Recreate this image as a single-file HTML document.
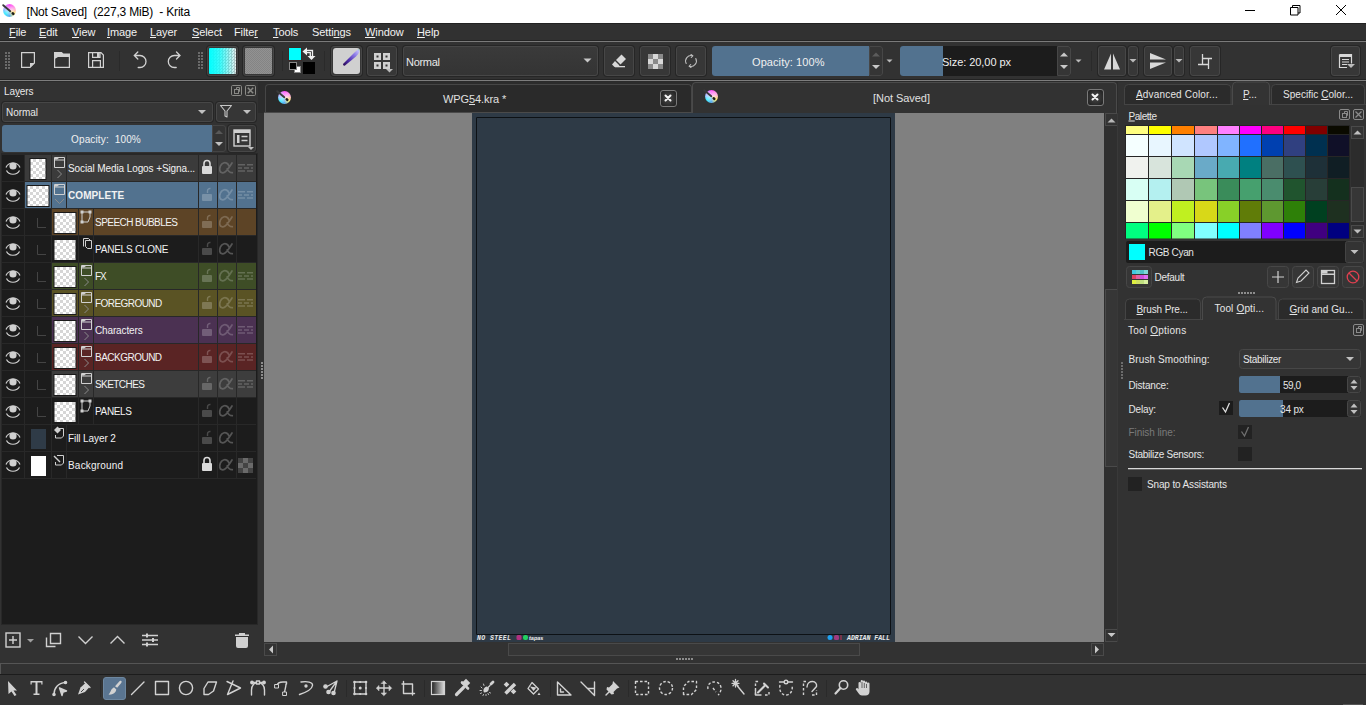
<!DOCTYPE html>
<html><head><meta charset="utf-8">
<style>
*{margin:0;padding:0;box-sizing:border-box}
html,body{width:1366px;height:705px;overflow:hidden;background:#323232;font-family:"Liberation Sans",sans-serif;font-size:12px;color:#e6e6e6}
.a{position:absolute}
.t{position:absolute;white-space:pre;line-height:1}
.btn{position:absolute;background:#373737;border:1px solid #474747;border-radius:3px;box-shadow:0 0 0 1px #262626}
u{text-decoration:underline;text-underline-offset:1px;text-decoration-thickness:1px}
</style></head><body>
<!-- title bar -->
<div class="a" style="left:0;top:0;width:1366px;height:23px;background:#fff"></div>
<div class="t" style="left:26.5px;top:6px;color:#000;font-size:12px;letter-spacing:-0.2px">[Not Saved]  (227,3 MiB)  - Krita</div>
<!-- menu bar -->
<div class="a" style="left:0;top:23px;width:1366px;height:18px;background:#313131"></div>
<div class="a" style="left:0;top:23px;width:1366px;height:1px;background:#222"></div>
<div class="a" style="left:0;top:40px;width:1366px;height:1px;background:#242424"></div>
<div class="a" style="left:0;top:41px;width:1366px;height:1px;background:#7a7a7a"></div>
<!-- toolbar -->
<div class="a" style="left:0;top:42px;width:1366px;height:37px;background:#323232"></div>
<div class="a" style="left:0;top:79px;width:1366px;height:1px;background:#232323"></div>
<div class="a" style="left:0;top:80px;width:1366px;height:1px;background:#7d7d7d"></div>
<div class="a" style="left:0;top:81px;width:1366px;height:1px;background:#2b2b2b"></div>
<!-- status bar -->
<div class="a" style="left:0;top:663px;width:1366px;height:1px;background:#555"></div>
<div class="a" style="left:0;top:674px;width:1366px;height:1px;background:#1c1c1c"></div>
<div class="a" style="left:0;top:663px;width:1px;height:11px;background:#555"></div>
<!-- menu text -->
<div class="t" style="left:9px;top:27px;font-size:11px;color:#f2f2f2;letter-spacing:-0.1px"><u>F</u>ile</div>
<div class="t" style="left:39px;top:27px;font-size:11px;color:#f2f2f2;letter-spacing:-0.1px"><u>E</u>dit</div>
<div class="t" style="left:72px;top:27px;font-size:11px;color:#f2f2f2;letter-spacing:-0.1px"><u>V</u>iew</div>
<div class="t" style="left:107px;top:27px;font-size:11px;color:#f2f2f2;letter-spacing:-0.1px"><u>I</u>mage</div>
<div class="t" style="left:150px;top:27px;font-size:11px;color:#f2f2f2;letter-spacing:-0.1px"><u>L</u>ayer</div>
<div class="t" style="left:192px;top:27px;font-size:11px;color:#f2f2f2;letter-spacing:-0.1px"><u>S</u>elect</div>
<div class="t" style="left:234px;top:27px;font-size:11px;color:#f2f2f2;letter-spacing:-0.1px">Filte<u>r</u></div>
<div class="t" style="left:273px;top:27px;font-size:11px;color:#f2f2f2;letter-spacing:-0.1px"><u>T</u>ools</div>
<div class="t" style="left:312px;top:27px;font-size:11px;color:#f2f2f2;letter-spacing:-0.1px">Setti<u>n</u>gs</div>
<div class="t" style="left:365px;top:27px;font-size:11px;color:#f2f2f2;letter-spacing:-0.1px"><u>W</u>indow</div>
<div class="t" style="left:417px;top:27px;font-size:11px;color:#f2f2f2;letter-spacing:-0.1px"><u>H</u>elp</div>

<svg class="a" style="left:0;top:0" width="1366" height="81" viewBox="0 0 1366 81">
 <!-- window controls -->
 <g stroke="#000" stroke-width="1" fill="none">
  <path d="M1245 10.5H1255"/>
  <path d="M1290.5 7.5h7.5v7.5h-7.5z M1292.5 7.5v-2h7.5v7.5h-2"/>
  <path d="M1336 5L1346 15M1346 5L1336 15"/>
 </g>
 <!-- grip 1 -->
 <g fill="#6a6a6a">
  <rect x="5" y="52" width="2" height="2"/><rect x="8" y="52" width="2" height="2"/>
  <rect x="5" y="55" width="2" height="2"/><rect x="8" y="55" width="2" height="2"/>
  <rect x="5" y="58" width="2" height="2"/><rect x="8" y="58" width="2" height="2"/>
  <rect x="5" y="61" width="2" height="2"/><rect x="8" y="61" width="2" height="2"/>
  <rect x="5" y="64" width="2" height="2"/><rect x="8" y="64" width="2" height="2"/>
  <rect x="5" y="67" width="2" height="2"/><rect x="8" y="67" width="2" height="2"/>
 </g>
 <g fill="#6a6a6a">
  <rect x="198" y="52" width="2" height="2"/><rect x="201" y="52" width="2" height="2"/>
  <rect x="198" y="55" width="2" height="2"/><rect x="201" y="55" width="2" height="2"/>
  <rect x="198" y="58" width="2" height="2"/><rect x="201" y="58" width="2" height="2"/>
  <rect x="198" y="61" width="2" height="2"/><rect x="201" y="61" width="2" height="2"/>
  <rect x="198" y="64" width="2" height="2"/><rect x="201" y="64" width="2" height="2"/>
  <rect x="198" y="67" width="2" height="2"/><rect x="201" y="67" width="2" height="2"/>
 </g>
 <!-- new / open / save -->
 <g stroke="#d2d2d2" stroke-width="1.2" fill="none">
  <path d="M21.6 52.6H34.4V63L30 67.4H21.6Z"/>
  <path d="M54.6 52.6H61.5L63 54H69.4V67.4H54.6Z"/>
  <path d="M88.6 52.6H101L103.4 55V67.4H88.6Z M92.6 52.6V57.4H100V52.6 M92.6 67.4V60.6H100.4V67.4"/>
 </g>
 <path d="M30 63H34.6L30 67.6Z" fill="#d2d2d2"/>
 <path d="M54.6 52.6H61.5L63 54H69.4V57H58L54.6 59Z" fill="#d2d2d2"/>
 <rect x="97" y="53" width="2.5" height="4" fill="#d2d2d2"/>
 <rect x="119" y="51" width="1" height="20" fill="#2a2a2a"/>
 <!-- undo redo -->
 <g stroke="#d2d2d2" stroke-width="1.3" fill="none" stroke-linecap="round">
  <path d="M138.2 67.5H140A6 6 0 0 0 140 55.5H134.5 M137.8 52L134.3 55.5L137.8 59"/>
  <path d="M176.2 67.5H174.3A6 6 0 0 1 174.3 55.5H179.8 M176.5 52L180 55.5L176.5 59"/>
 </g>
 <rect x="282" y="51" width="1" height="20" fill="#2a2a2a"/>
 <rect x="324" y="51" width="1" height="20" fill="#2a2a2a"/>
 <rect x="1091" y="51" width="1" height="20" fill="#2a2a2a"/>
</svg>

<!-- gradient / pattern buttons -->
<div class="btn" style="left:207px;top:46px;width:31px;height:30px"></div>
<div class="a" style="left:209px;top:48px;width:27px;height:26px;border-radius:1px;background:linear-gradient(90deg,#00ffff 0%,rgba(0,255,255,0.75) 40%,rgba(0,255,255,0) 100%),repeating-conic-gradient(#b8c4c4 0 25%,#e8f0f0 0 50%) 0 0/3px 3px"></div>
<div class="btn" style="left:243px;top:46px;width:31px;height:30px"></div>
<div class="a" style="left:245px;top:48px;width:27px;height:26px;border-radius:1px;background:repeating-conic-gradient(#848484 0 25%,#929292 0 50%) 0 0/2px 2px"></div>
<!-- fg/bg -->
<div class="a" style="left:289px;top:48px;width:12px;height:12px;background:#00ffff;box-shadow:0 0 0 1px #3a2a2a"></div>
<div class="a" style="left:303px;top:62px;width:12px;height:12px;background:#000"></div>
<div class="a" style="left:294px;top:66px;width:7px;height:7px;background:#fff;border:1px solid #888"></div>
<div class="a" style="left:289px;top:62px;width:8px;height:8px;background:#000;border:1px solid #888"></div>
<svg class="a" style="left:300px;top:45px" width="18" height="18" viewBox="300 45 18 18">
 <path d="M302.5 51.5L307 47.5V55.5Z" fill="#f0f0f0"/>
 <path d="M307.5 56H315.5L311.5 60Z" fill="#f0f0f0"/>
 <path d="M306.5 50.5H312.5V56.5 M306.5 52.7H310.3V56.5" fill="none" stroke="#f0f0f0" stroke-width="1.3"/>
</svg>
<!-- brush preset btn -->
<div class="btn" style="left:331px;top:46px;width:31px;height:30px"></div>
<div class="a" style="left:333px;top:48px;width:27px;height:26px;border-radius:3px;background:#d0d0d0"></div>
<svg class="a" style="left:333px;top:47px" width="27" height="20" viewBox="0 0 27 20">
 <defs><linearGradient id="bp" x1="0" y1="1" x2="1" y2="0"><stop offset="0" stop-color="#2a0a50"/><stop offset="0.35" stop-color="#5030b0"/><stop offset="0.7" stop-color="#9080e8"/><stop offset="0.9" stop-color="#c0b8f8"/><stop offset="1" stop-color="#80d8c0"/></linearGradient></defs>
 <path d="M10 17L21.5 5.5C23 4 24.5 2.5 26 2L26.5 4.5C25.5 6.5 24.5 8 23 9.5L12 18.5C11 19 10 18.5 10 17Z" fill="url(#bp)"/>
</svg>
<!-- workspace btn -->
<div class="btn" style="left:367px;top:46px;width:30px;height:30px"></div>
<svg class="a" style="left:367px;top:46px" width="30" height="30" viewBox="0 0 30 30">
 <g fill="#d0d0d0"><rect x="7" y="7" width="7" height="7"/><rect x="16" y="7" width="7" height="7"/><rect x="7" y="16" width="7" height="7"/><rect x="16" y="16" width="7" height="7"/></g>
 <g fill="#333"><rect x="9.5" y="9.5" width="2" height="2"/><rect x="18.5" y="9.5" width="2" height="2"/><rect x="9.5" y="18.5" width="2" height="2"/><rect x="18.5" y="18.5" width="2" height="2"/></g>
 <path d="M19 23L26 23L22.5 26.5Z" fill="#bbb"/>
</svg>
<!-- blend combo -->
<div class="btn" style="left:403px;top:46px;width:195px;height:30px;background:linear-gradient(#3a3a3a,#343434)"></div>
<div class="t" style="left:406px;top:57px;font-size:11px;color:#e8e8e8;letter-spacing:-0.3px">Normal</div>
<svg class="a" style="left:583px;top:58px" width="10" height="6"><path d="M0.5 0.5H8.5L4.5 4.5Z" fill="#c8c8c8"/></svg>
<!-- eraser / checker / reload -->
<div class="btn" style="left:604px;top:46px;width:30px;height:30px"></div>
<svg class="a" style="left:604px;top:46px" width="30" height="30" viewBox="0 0 30 30">
 <path d="M17.5 8.5L22 13L16.5 18.5L12 14Z" fill="#d8d8d8"/>
 <path d="M11 15L15.5 19.5L14 21H10.5L8 18.5Z" fill="#d8d8d8"/>
 <rect x="11" y="20" width="10" height="1.3" fill="#d8d8d8"/>
</svg>
<div class="btn" style="left:640px;top:46px;width:30px;height:30px"></div>
<svg class="a" style="left:648px;top:54px" width="15" height="15" viewBox="0 0 15 15">
 <rect width="15" height="15" fill="#d8d8d8"/>
 <g fill="#8a8a8a"><rect x="0" y="0" width="5" height="5"/><rect x="10" y="0" width="5" height="5"/><rect x="5" y="5" width="5" height="5"/><rect x="0" y="10" width="5" height="5"/><rect x="10" y="10" width="5" height="5"/></g>
</svg>
<div class="btn" style="left:676px;top:46px;width:30px;height:30px"></div>
<svg class="a" style="left:676px;top:46px" width="30" height="30" viewBox="0 0 30 30">
 <g stroke="#bdbdbd" stroke-width="1.1" fill="none" stroke-linecap="round">
  <path d="M16.5 9.7A5.5 5.5 0 0 0 10.2 17.5"/>
  <path d="M13.5 20.3A5.5 5.5 0 0 0 19.8 12.5"/>
  <path d="M15 8.5L16.8 9.8L15.3 11.5"/>
  <path d="M15 21.5L13.2 20.2L14.7 18.5"/>
 </g>
</svg>
<!-- opacity slider -->
<div class="a" style="left:712px;top:46px;width:171px;height:30px;border-radius:3px;background:#1e1e1e;border:1px solid #262626"></div>
<div class="a" style="left:712px;top:46px;width:157px;height:30px;border-radius:3px 0 0 3px;background:#52728f"></div>
<div class="a" style="left:869px;top:46px;width:14px;height:30px;border-radius:0 3px 3px 0;background:#353535;border:1px solid #474747"></div>
<svg class="a" style="left:870px;top:50px" width="12" height="22"><path d="M2 6.5H10L6 2.5Z" fill="#5c5c5c"/><path d="M2 15H10L6 19Z" fill="#c8c8c8"/></svg>
<div class="t" style="left:752px;top:57px;font-size:11px;color:#f0f0f0;letter-spacing:0.08px">Opacity: 100%</div>
<svg class="a" style="left:886px;top:59px" width="8" height="5"><path d="M0.5 0.5H6.5L3.5 3.5Z" fill="#bbb"/></svg>
<!-- size slider -->
<div class="a" style="left:900px;top:46px;width:171px;height:30px;border-radius:3px;background:#1c1c1c"></div>
<div class="a" style="left:900px;top:46px;width:43px;height:30px;border-radius:3px 0 0 3px;background:#52728f"></div>
<div class="a" style="left:1057px;top:46px;width:14px;height:30px;border-radius:0 3px 3px 0;background:#353535;border:1px solid #474747"></div>
<svg class="a" style="left:1058px;top:50px" width="12" height="22"><path d="M2 6.5H10L6 2.5Z" fill="#c8c8c8"/><path d="M2 15H10L6 19Z" fill="#c8c8c8"/></svg>
<div class="t" style="left:942px;top:57px;font-size:11px;color:#f0f0f0;letter-spacing:-0.05px">Size: 20,00 px</div>
<svg class="a" style="left:1075px;top:59px" width="8" height="5"><path d="M0.5 0.5H6.5L3.5 3.5Z" fill="#bbb"/></svg>
<!-- mirror etc -->
<div class="btn" style="left:1098px;top:46px;width:28px;height:30px"></div>
<div class="btn" style="left:1128px;top:46px;width:10px;height:30px"></div>
<div class="btn" style="left:1144px;top:46px;width:28px;height:30px"></div>
<div class="btn" style="left:1174px;top:46px;width:10px;height:30px"></div>
<div class="btn" style="left:1190px;top:46px;width:30px;height:30px"></div>
<div class="btn" style="left:1331px;top:46px;width:29px;height:30px"></div>
<svg class="a" style="left:0;top:0" width="1366" height="81" viewBox="0 0 1366 81">
 <g fill="#d8d8d8">
  <path d="M1104 69.5H1111V53.5Z"/><path d="M1113 53.5V69.5H1120Z"/>
  <path d="M1129.5 59H1136.5L1133 62.5Z" fill="#bbb"/>
  <path d="M1150 53L1166 59.5H1150Z"/><path d="M1150 62.5H1166L1150 69Z"/>
  <path d="M1175.5 59H1182.5L1179 62.5Z" fill="#bbb"/>
 </g>
 <g stroke="#d8d8d8" stroke-width="1.3" fill="none">
  <path d="M1202.5 54V65M1202.5 58.5H1212M1198 64.5H1208.5M1208.5 58.5V69"/>
 </g>
 <g fill="none" stroke="#d8d8d8" stroke-width="1.2">
  <path d="M1339.5 54.5H1351.5V63.5M1339.5 54.5V67.5H1347"/>
  <path d="M1342 59.5H1349M1342 62H1349M1342 64.5H1347"/>
 </g>
 <rect x="1340" y="55" width="11.5" height="2" fill="#d8d8d8"/>
 <path d="M1347 64H1355L1351 68Z" fill="#bbb"/>
</svg>


<div class="a" style="left:3.200000000000001px;top:4.200000000000001px;width:13.2px;height:13.2px;border-radius:50%;background:conic-gradient(from 0deg,#ff50f8 0deg,#ffb0e0 70deg,#fff070 125deg,#60b0f0 180deg,#40f0ff 235deg,#c0a8ff 300deg,#ff50f8 360deg)"></div>
<div class="a" style="left:5.1800000000000015px;top:6.1800000000000015px;width:9.239999999999998px;height:9.239999999999998px;border-radius:50%;background:radial-gradient(rgba(255,255,255,0.6),rgba(255,255,255,0))"></div>
<svg class="a" style="left:0.8000000000000007px;top:1.8000000000000007px" width="18" height="18" viewBox="0 0 18 18"><path d="M2.2 3.2L9.3 9.2" stroke="#3a3a3a" stroke-width="1.9" stroke-linecap="round"/><ellipse cx="12" cy="11.6" rx="1.7" ry="1.3" transform="rotate(40 12 11.6)" fill="#1e1e1e"/></svg><div class="t" style="left:4px;top:86.5px;font-size:10px;color:#e8e8e8;letter-spacing:-0.1px">La<u>y</u>ers</div>
<svg class="a" style="left:230px;top:84px" width="28" height="14" viewBox="0 0 28 14">
 <g fill="none" stroke="#8a8a86" stroke-width="1">
  <rect x="1.5" y="1.5" width="10" height="10" rx="1.2"/>
  <rect x="4.5" y="5.5" width="4" height="4"/><path d="M6.5 5.5V3.5H9.5V7.5H8.5"/>
  <rect x="15.5" y="1.5" width="10" height="10" rx="1.2"/>
  <path d="M17.8 3.8L23.2 9.2M23.2 3.8L17.8 9.2" stroke-width="1.5"/>
 </g></svg>
<div class="btn" style="left:2px;top:102px;width:211px;height:20px;background:#363636"></div>
<div class="t" style="left:6px;top:108.2px;font-size:10px;color:#e8e8e8;letter-spacing:-0.05px">Normal</div>
<svg class="a" style="left:198px;top:110px" width="9" height="5"><path d="M0 0H8L4 4Z" fill="#c0c0c0"/></svg>
<div class="btn" style="left:216px;top:102px;width:40px;height:20px;background:#363636"></div>
<svg class="a" style="left:216px;top:102px" width="40" height="20" viewBox="0 0 40 20">
 <path d="M4.5 3.5H15.5L11 9V15L9 14V9Z" fill="none" stroke="#c8c8c8" stroke-width="1.1" stroke-linejoin="round"/>
 <path d="M27 8H35L31 12Z" fill="#c0c0c0"/></svg>
<div class="a" style="left:2px;top:125px;width:210px;height:27px;border-radius:3px 0 0 3px;background:#52728f"></div>
<div class="t" style="left:71px;top:135px;font-size:10px;color:#f0f0f0;letter-spacing:0.15px">Opacity:  100%</div>
<div class="a" style="left:212px;top:125px;width:14px;height:27px;border-radius:0 3px 3px 0;background:#333;border:1px solid #444"></div>
<svg class="a" style="left:213px;top:128px" width="12" height="22"><path d="M2 6H10L6 2Z" fill="#585858"/><path d="M2 14H10L6 18Z" fill="#c0c0c0"/></svg>
<div class="btn" style="left:228px;top:125px;width:28px;height:27px;background:#363636"></div>
<svg class="a" style="left:228px;top:125px" width="28" height="27" viewBox="0 0 28 27">
 <rect x="6" y="5" width="16" height="16" fill="none" stroke="#d0d0d0" stroke-width="1.4"/>
 <rect x="6" y="5" width="16" height="3" fill="#d0d0d0"/>
 <rect x="9" y="10" width="2.5" height="8" fill="#d0d0d0"/>
 <path d="M13.5 11.5H19.5M13.5 15.5H19.5" stroke="#d0d0d0" stroke-width="1.3"/>
 <path d="M20 22H26L23 25Z" fill="#c0c0c0"/></svg>
<div class="a" style="left:1px;top:153px;width:257px;height:472px;background:#1c1c1c;border:1px solid #282828"></div>
<svg class="a" style="left:0;top:150px" width="260" height="340" viewBox="0 150 260 340">
<rect x="2" y="154" width="254" height="1" fill="#282828"/>
<rect x="25" y="155" width="231" height="26" fill="#3b3b3b"/>
<rect x="24" y="155" width="1" height="26" fill="#282828"/>
<rect x="51" y="155" width="1" height="26" fill="#282828"/>
<rect x="66" y="155" width="1" height="26" fill="#282828"/>
<rect x="198" y="155" width="1" height="26" fill="#282828"/>
<rect x="217" y="155" width="1" height="26" fill="#282828"/>
<rect x="236" y="155" width="1" height="26" fill="#282828"/>
<path d="M6 167.5A7.5 7 0 0 1 20 167.5" fill="none" stroke="#d0d0d0" stroke-width="1.2"/>
<circle cx="13" cy="166" r="3.6" fill="#d0d0d0"/>
<path d="M6.5 170.5A7 6 0 0 0 19.5 170.5" fill="none" stroke="#d0d0d0" stroke-width="1.2"/>
<rect x="29.5" y="158" width="17" height="22" fill="#1a1a1a"/>
<rect x="30.5" y="159" width="15" height="20" fill="url(#chk)"/>
<path d="M54.5 157.5H64.5V167.5H54.5Z M54.5 160H64.5" fill="none" stroke="#d0d0d0" stroke-width="1"/>
<path d="M55 158H59L57 159.5H55Z" fill="#d0d0d0"/>
<path d="M57.5 170L61.5 174L57.5 178" fill="none" stroke="#8a8a8a" stroke-width="1"/>
<path d="M204 166V163.5A3 3 0 0 1 210 163.5V166" fill="none" stroke="#dadada" stroke-width="1.6"/>
<rect x="202" y="166" width="10" height="8" rx="1" fill="#dadada"/>
<path transform="translate(0 -297.5)" d="M229 463.5C228 460.5 225.5 459.8 223.5 460.5C220.5 461.5 219.3 465.5 219.8 468C220.3 470.5 223 470.8 225 469.5C227 468.2 229.5 464.5 232 460.5 M227.2 466.3C228.2 468.8 229.5 470.3 232.3 470.2" fill="none" stroke="rgba(255,255,255,0.2)" stroke-width="1.75" stroke-linecap="round"/>
<path d="M238 164.7H245M247 164.7H253" stroke="rgba(255,255,255,0.2)" stroke-width="1.6"/>
<path d="M238 168H242M244 168H249M251 168H253" stroke="rgba(255,255,255,0.2)" stroke-width="1.6"/>
<path d="M238 171H245M247 171H253" stroke="rgba(255,255,255,0.2)" stroke-width="1.6"/>
<text x="68" y="172" font-family="Liberation Sans" font-size="10" letter-spacing="-0.1" font-weight="normal" fill="#f2f2f2">Social Media Logos +Signa...</text>
<rect x="2" y="181" width="254" height="1" fill="#282828"/>
<rect x="25" y="182" width="231" height="26" fill="#52728f"/>
<rect x="24" y="182" width="1" height="26" fill="#282828"/>
<rect x="51" y="182" width="1" height="26" fill="#282828"/>
<rect x="66" y="182" width="1" height="26" fill="#282828"/>
<rect x="198" y="182" width="1" height="26" fill="#282828"/>
<rect x="217" y="182" width="1" height="26" fill="#282828"/>
<rect x="236" y="182" width="1" height="26" fill="#282828"/>
<path d="M6 194.5A7.5 7 0 0 1 20 194.5" fill="none" stroke="#d0d0d0" stroke-width="1.2"/>
<circle cx="13" cy="193" r="3.6" fill="#d0d0d0"/>
<path d="M6.5 197.5A7 6 0 0 0 19.5 197.5" fill="none" stroke="#d0d0d0" stroke-width="1.2"/>
<rect x="26.5" y="185" width="23" height="22" fill="#1a1a1a"/>
<rect x="27.5" y="186" width="21" height="20" fill="url(#chk)"/>
<path d="M54.5 184.5H64.5V194.5H54.5Z M54.5 187H64.5" fill="none" stroke="#d0d0d0" stroke-width="1"/>
<path d="M55 185H59L57 186.5H55Z" fill="#d0d0d0"/>
<path d="M55 199L59.5 203.5L64 199" fill="none" stroke="#8a8a8a" stroke-width="1"/>
<path d="M207.5 193V191A2.5 2.5 0 0 1 210.5 188.5" fill="none" stroke="rgba(255,255,255,0.22)" stroke-width="1.4"/>
<rect x="202" y="194" width="10" height="7" rx="1" fill="rgba(255,255,255,0.22)"/>
<path transform="translate(0 -270.5)" d="M229 463.5C228 460.5 225.5 459.8 223.5 460.5C220.5 461.5 219.3 465.5 219.8 468C220.3 470.5 223 470.8 225 469.5C227 468.2 229.5 464.5 232 460.5 M227.2 466.3C228.2 468.8 229.5 470.3 232.3 470.2" fill="none" stroke="rgba(255,255,255,0.2)" stroke-width="1.75" stroke-linecap="round"/>
<path d="M238 191.7H245M247 191.7H253" stroke="rgba(255,255,255,0.2)" stroke-width="1.6"/>
<path d="M238 195H242M244 195H249M251 195H253" stroke="rgba(255,255,255,0.2)" stroke-width="1.6"/>
<path d="M238 198H245M247 198H253" stroke="rgba(255,255,255,0.2)" stroke-width="1.6"/>
<text x="68" y="199" font-family="Liberation Sans" font-size="10" letter-spacing="0.07" font-weight="bold" fill="#f2f2f2">COMPLETE</text>
<rect x="2" y="208" width="254" height="1" fill="#282828"/>
<rect x="52" y="209" width="204" height="26" fill="#5d4426"/>
<rect x="24" y="209" width="1" height="26" fill="#282828"/>
<rect x="78" y="209" width="1" height="26" fill="#282828"/>
<rect x="93" y="209" width="1" height="26" fill="#282828"/>
<rect x="198" y="209" width="1" height="26" fill="#282828"/>
<rect x="217" y="209" width="1" height="26" fill="#282828"/>
<rect x="236" y="209" width="1" height="26" fill="#282828"/>
<rect x="51" y="209" width="1" height="26" fill="#282828"/>
<path d="M37.5 218V227.5H46" stroke="#444" stroke-width="1" fill="none"/>
<path d="M6 221.5A7.5 7 0 0 1 20 221.5" fill="none" stroke="#d0d0d0" stroke-width="1.2"/>
<circle cx="13" cy="220" r="3.6" fill="#d0d0d0"/>
<path d="M6.5 224.5A7 6 0 0 0 19.5 224.5" fill="none" stroke="#d0d0d0" stroke-width="1.2"/>
<rect x="53.5" y="212" width="23" height="22" fill="#1a1a1a"/>
<rect x="54.5" y="213" width="21" height="20" fill="url(#chk)"/>
<path d="M82 212H90V217L88 222H82Z" fill="none" stroke="#d0d0d0" stroke-width="1"/>
<rect x="80.5" y="210.5" width="3" height="3" fill="#d0d0d0"/>
<rect x="88.5" y="210.5" width="3" height="3" fill="#d0d0d0"/>
<rect x="80.5" y="220.5" width="3" height="3" fill="#d0d0d0"/>
<path d="M207.5 220V218A2.5 2.5 0 0 1 210.5 215.5" fill="none" stroke="rgba(255,255,255,0.22)" stroke-width="1.4"/>
<rect x="202" y="221" width="10" height="7" rx="1" fill="rgba(255,255,255,0.22)"/>
<path transform="translate(0 -243.5)" d="M229 463.5C228 460.5 225.5 459.8 223.5 460.5C220.5 461.5 219.3 465.5 219.8 468C220.3 470.5 223 470.8 225 469.5C227 468.2 229.5 464.5 232 460.5 M227.2 466.3C228.2 468.8 229.5 470.3 232.3 470.2" fill="none" stroke="rgba(255,255,255,0.2)" stroke-width="1.75" stroke-linecap="round"/>
<text x="95" y="226" font-family="Liberation Sans" font-size="10" letter-spacing="-0.54" font-weight="normal" fill="#f2f2f2">SPEECH BUBBLES</text>
<rect x="2" y="235" width="254" height="1" fill="#282828"/>
<rect x="24" y="236" width="1" height="26" fill="#282828"/>
<rect x="78" y="236" width="1" height="26" fill="#282828"/>
<rect x="93" y="236" width="1" height="26" fill="#282828"/>
<rect x="198" y="236" width="1" height="26" fill="#282828"/>
<rect x="217" y="236" width="1" height="26" fill="#282828"/>
<rect x="236" y="236" width="1" height="26" fill="#282828"/>
<rect x="51" y="236" width="1" height="26" fill="#282828"/>
<path d="M37.5 245V254.5H46" stroke="#444" stroke-width="1" fill="none"/>
<path d="M6 248.5A7.5 7 0 0 1 20 248.5" fill="none" stroke="#d0d0d0" stroke-width="1.2"/>
<circle cx="13" cy="247" r="3.6" fill="#d0d0d0"/>
<path d="M6.5 251.5A7 6 0 0 0 19.5 251.5" fill="none" stroke="#d0d0d0" stroke-width="1.2"/>
<rect x="53.5" y="239" width="23" height="22" fill="#1a1a1a"/>
<rect x="54.5" y="240" width="21" height="20" fill="url(#chk)"/>
<path d="M83.5 246.5V238.5H88.5L90.5 240.5" fill="none" stroke="#d0d0d0" stroke-width="1"/>
<path d="M85.5 240.5H91.5V248.5H87.5L85.5 246.5Z" fill="#1c1c1c" stroke="#d0d0d0" stroke-width="1"/>
<path d="M207.5 247V245A2.5 2.5 0 0 1 210.5 242.5" fill="none" stroke="#4a4a4a" stroke-width="1.4"/>
<rect x="202" y="248" width="10" height="7" rx="1" fill="#4a4a4a"/>
<path transform="translate(0 -216.5)" d="M229 463.5C228 460.5 225.5 459.8 223.5 460.5C220.5 461.5 219.3 465.5 219.8 468C220.3 470.5 223 470.8 225 469.5C227 468.2 229.5 464.5 232 460.5 M227.2 466.3C228.2 468.8 229.5 470.3 232.3 470.2" fill="none" stroke="#555" stroke-width="1.75" stroke-linecap="round"/>
<text x="95" y="253" font-family="Liberation Sans" font-size="10" letter-spacing="-0.23" font-weight="normal" fill="#f2f2f2">PANELS CLONE</text>
<rect x="2" y="262" width="254" height="1" fill="#282828"/>
<rect x="52" y="263" width="204" height="26" fill="#3e4d26"/>
<rect x="24" y="263" width="1" height="26" fill="#282828"/>
<rect x="78" y="263" width="1" height="26" fill="#282828"/>
<rect x="93" y="263" width="1" height="26" fill="#282828"/>
<rect x="198" y="263" width="1" height="26" fill="#282828"/>
<rect x="217" y="263" width="1" height="26" fill="#282828"/>
<rect x="236" y="263" width="1" height="26" fill="#282828"/>
<rect x="51" y="263" width="1" height="26" fill="#282828"/>
<path d="M37.5 272V281.5H46" stroke="#444" stroke-width="1" fill="none"/>
<path d="M6 275.5A7.5 7 0 0 1 20 275.5" fill="none" stroke="#d0d0d0" stroke-width="1.2"/>
<circle cx="13" cy="274" r="3.6" fill="#d0d0d0"/>
<path d="M6.5 278.5A7 6 0 0 0 19.5 278.5" fill="none" stroke="#d0d0d0" stroke-width="1.2"/>
<rect x="53.5" y="266" width="23" height="22" fill="#1a1a1a"/>
<rect x="54.5" y="267" width="21" height="20" fill="url(#chk)"/>
<path d="M81.5 265.5H91.5V275.5H81.5Z M81.5 268H91.5" fill="none" stroke="#d0d0d0" stroke-width="1"/>
<path d="M82 266H86L84 267.5H82Z" fill="#d0d0d0"/>
<path d="M84.5 278L88.5 282L84.5 286" fill="none" stroke="#8a8a8a" stroke-width="1"/>
<path d="M207.5 274V272A2.5 2.5 0 0 1 210.5 269.5" fill="none" stroke="rgba(255,255,255,0.22)" stroke-width="1.4"/>
<rect x="202" y="275" width="10" height="7" rx="1" fill="rgba(255,255,255,0.22)"/>
<path transform="translate(0 -189.5)" d="M229 463.5C228 460.5 225.5 459.8 223.5 460.5C220.5 461.5 219.3 465.5 219.8 468C220.3 470.5 223 470.8 225 469.5C227 468.2 229.5 464.5 232 460.5 M227.2 466.3C228.2 468.8 229.5 470.3 232.3 470.2" fill="none" stroke="rgba(255,255,255,0.2)" stroke-width="1.75" stroke-linecap="round"/>
<path d="M238 272.7H245M247 272.7H253" stroke="rgba(255,255,255,0.2)" stroke-width="1.6"/>
<path d="M238 276H242M244 276H249M251 276H253" stroke="rgba(255,255,255,0.2)" stroke-width="1.6"/>
<path d="M238 279H245M247 279H253" stroke="rgba(255,255,255,0.2)" stroke-width="1.6"/>
<text x="95" y="280" font-family="Liberation Sans" font-size="10" letter-spacing="-1.0" font-weight="normal" fill="#f2f2f2">FX</text>
<rect x="2" y="289" width="254" height="1" fill="#282828"/>
<rect x="52" y="290" width="204" height="26" fill="#5a5324"/>
<rect x="24" y="290" width="1" height="26" fill="#282828"/>
<rect x="78" y="290" width="1" height="26" fill="#282828"/>
<rect x="93" y="290" width="1" height="26" fill="#282828"/>
<rect x="198" y="290" width="1" height="26" fill="#282828"/>
<rect x="217" y="290" width="1" height="26" fill="#282828"/>
<rect x="236" y="290" width="1" height="26" fill="#282828"/>
<rect x="51" y="290" width="1" height="26" fill="#282828"/>
<path d="M37.5 299V308.5H46" stroke="#444" stroke-width="1" fill="none"/>
<path d="M6 302.5A7.5 7 0 0 1 20 302.5" fill="none" stroke="#d0d0d0" stroke-width="1.2"/>
<circle cx="13" cy="301" r="3.6" fill="#d0d0d0"/>
<path d="M6.5 305.5A7 6 0 0 0 19.5 305.5" fill="none" stroke="#d0d0d0" stroke-width="1.2"/>
<rect x="53.5" y="293" width="23" height="22" fill="#1a1a1a"/>
<rect x="54.5" y="294" width="21" height="20" fill="url(#chk)"/>
<path d="M81.5 292.5H91.5V302.5H81.5Z M81.5 295H91.5" fill="none" stroke="#d0d0d0" stroke-width="1"/>
<path d="M82 293H86L84 294.5H82Z" fill="#d0d0d0"/>
<path d="M84.5 305L88.5 309L84.5 313" fill="none" stroke="#8a8a8a" stroke-width="1"/>
<path d="M207.5 301V299A2.5 2.5 0 0 1 210.5 296.5" fill="none" stroke="rgba(255,255,255,0.22)" stroke-width="1.4"/>
<rect x="202" y="302" width="10" height="7" rx="1" fill="rgba(255,255,255,0.22)"/>
<path transform="translate(0 -162.5)" d="M229 463.5C228 460.5 225.5 459.8 223.5 460.5C220.5 461.5 219.3 465.5 219.8 468C220.3 470.5 223 470.8 225 469.5C227 468.2 229.5 464.5 232 460.5 M227.2 466.3C228.2 468.8 229.5 470.3 232.3 470.2" fill="none" stroke="rgba(255,255,255,0.2)" stroke-width="1.75" stroke-linecap="round"/>
<path d="M238 299.7H245M247 299.7H253" stroke="rgba(255,255,255,0.2)" stroke-width="1.6"/>
<path d="M238 303H242M244 303H249M251 303H253" stroke="rgba(255,255,255,0.2)" stroke-width="1.6"/>
<path d="M238 306H245M247 306H253" stroke="rgba(255,255,255,0.2)" stroke-width="1.6"/>
<text x="95" y="307" font-family="Liberation Sans" font-size="10" letter-spacing="-0.56" font-weight="normal" fill="#f2f2f2">FOREGROUND</text>
<rect x="2" y="316" width="254" height="1" fill="#282828"/>
<rect x="52" y="317" width="204" height="26" fill="#4b3152"/>
<rect x="24" y="317" width="1" height="26" fill="#282828"/>
<rect x="78" y="317" width="1" height="26" fill="#282828"/>
<rect x="93" y="317" width="1" height="26" fill="#282828"/>
<rect x="198" y="317" width="1" height="26" fill="#282828"/>
<rect x="217" y="317" width="1" height="26" fill="#282828"/>
<rect x="236" y="317" width="1" height="26" fill="#282828"/>
<rect x="51" y="317" width="1" height="26" fill="#282828"/>
<path d="M37.5 326V335.5H46" stroke="#444" stroke-width="1" fill="none"/>
<path d="M6 329.5A7.5 7 0 0 1 20 329.5" fill="none" stroke="#d0d0d0" stroke-width="1.2"/>
<circle cx="13" cy="328" r="3.6" fill="#d0d0d0"/>
<path d="M6.5 332.5A7 6 0 0 0 19.5 332.5" fill="none" stroke="#d0d0d0" stroke-width="1.2"/>
<rect x="53.5" y="320" width="23" height="22" fill="#1a1a1a"/>
<rect x="54.5" y="321" width="21" height="20" fill="url(#chk)"/>
<path d="M81.5 319.5H91.5V329.5H81.5Z M81.5 322H91.5" fill="none" stroke="#d0d0d0" stroke-width="1"/>
<path d="M82 320H86L84 321.5H82Z" fill="#d0d0d0"/>
<path d="M84.5 332L88.5 336L84.5 340" fill="none" stroke="#8a8a8a" stroke-width="1"/>
<path d="M207.5 328V326A2.5 2.5 0 0 1 210.5 323.5" fill="none" stroke="rgba(255,255,255,0.22)" stroke-width="1.4"/>
<rect x="202" y="329" width="10" height="7" rx="1" fill="rgba(255,255,255,0.22)"/>
<path transform="translate(0 -135.5)" d="M229 463.5C228 460.5 225.5 459.8 223.5 460.5C220.5 461.5 219.3 465.5 219.8 468C220.3 470.5 223 470.8 225 469.5C227 468.2 229.5 464.5 232 460.5 M227.2 466.3C228.2 468.8 229.5 470.3 232.3 470.2" fill="none" stroke="rgba(255,255,255,0.2)" stroke-width="1.75" stroke-linecap="round"/>
<path d="M238 326.7H245M247 326.7H253" stroke="rgba(255,255,255,0.2)" stroke-width="1.6"/>
<path d="M238 330H242M244 330H249M251 330H253" stroke="rgba(255,255,255,0.2)" stroke-width="1.6"/>
<path d="M238 333H245M247 333H253" stroke="rgba(255,255,255,0.2)" stroke-width="1.6"/>
<text x="95" y="334" font-family="Liberation Sans" font-size="10" letter-spacing="-0.14" font-weight="normal" fill="#f2f2f2">Characters</text>
<rect x="2" y="343" width="254" height="1" fill="#282828"/>
<rect x="52" y="344" width="204" height="26" fill="#5a2424"/>
<rect x="24" y="344" width="1" height="26" fill="#282828"/>
<rect x="78" y="344" width="1" height="26" fill="#282828"/>
<rect x="93" y="344" width="1" height="26" fill="#282828"/>
<rect x="198" y="344" width="1" height="26" fill="#282828"/>
<rect x="217" y="344" width="1" height="26" fill="#282828"/>
<rect x="236" y="344" width="1" height="26" fill="#282828"/>
<rect x="51" y="344" width="1" height="26" fill="#282828"/>
<path d="M37.5 353V362.5H46" stroke="#444" stroke-width="1" fill="none"/>
<path d="M6 356.5A7.5 7 0 0 1 20 356.5" fill="none" stroke="#d0d0d0" stroke-width="1.2"/>
<circle cx="13" cy="355" r="3.6" fill="#d0d0d0"/>
<path d="M6.5 359.5A7 6 0 0 0 19.5 359.5" fill="none" stroke="#d0d0d0" stroke-width="1.2"/>
<rect x="53.5" y="347" width="23" height="22" fill="#1a1a1a"/>
<rect x="54.5" y="348" width="21" height="20" fill="url(#chk)"/>
<path d="M81.5 346.5H91.5V356.5H81.5Z M81.5 349H91.5" fill="none" stroke="#d0d0d0" stroke-width="1"/>
<path d="M82 347H86L84 348.5H82Z" fill="#d0d0d0"/>
<path d="M84.5 359L88.5 363L84.5 367" fill="none" stroke="#8a8a8a" stroke-width="1"/>
<path d="M207.5 355V353A2.5 2.5 0 0 1 210.5 350.5" fill="none" stroke="rgba(255,255,255,0.22)" stroke-width="1.4"/>
<rect x="202" y="356" width="10" height="7" rx="1" fill="rgba(255,255,255,0.22)"/>
<path transform="translate(0 -108.5)" d="M229 463.5C228 460.5 225.5 459.8 223.5 460.5C220.5 461.5 219.3 465.5 219.8 468C220.3 470.5 223 470.8 225 469.5C227 468.2 229.5 464.5 232 460.5 M227.2 466.3C228.2 468.8 229.5 470.3 232.3 470.2" fill="none" stroke="rgba(255,255,255,0.2)" stroke-width="1.75" stroke-linecap="round"/>
<path d="M238 353.7H245M247 353.7H253" stroke="rgba(255,255,255,0.2)" stroke-width="1.6"/>
<path d="M238 357H242M244 357H249M251 357H253" stroke="rgba(255,255,255,0.2)" stroke-width="1.6"/>
<path d="M238 360H245M247 360H253" stroke="rgba(255,255,255,0.2)" stroke-width="1.6"/>
<text x="95" y="361" font-family="Liberation Sans" font-size="10" letter-spacing="-0.51" font-weight="normal" fill="#f2f2f2">BACKGROUND</text>
<rect x="2" y="370" width="254" height="1" fill="#282828"/>
<rect x="52" y="371" width="204" height="26" fill="#3d3d3d"/>
<rect x="24" y="371" width="1" height="26" fill="#282828"/>
<rect x="78" y="371" width="1" height="26" fill="#282828"/>
<rect x="93" y="371" width="1" height="26" fill="#282828"/>
<rect x="198" y="371" width="1" height="26" fill="#282828"/>
<rect x="217" y="371" width="1" height="26" fill="#282828"/>
<rect x="236" y="371" width="1" height="26" fill="#282828"/>
<rect x="51" y="371" width="1" height="26" fill="#282828"/>
<path d="M37.5 380V389.5H46" stroke="#444" stroke-width="1" fill="none"/>
<path d="M6 383.5A7.5 7 0 0 1 20 383.5" fill="none" stroke="#d0d0d0" stroke-width="1.2"/>
<circle cx="13" cy="382" r="3.6" fill="#d0d0d0"/>
<path d="M6.5 386.5A7 6 0 0 0 19.5 386.5" fill="none" stroke="#d0d0d0" stroke-width="1.2"/>
<rect x="53.5" y="374" width="23" height="22" fill="#1a1a1a"/>
<rect x="54.5" y="375" width="21" height="20" fill="url(#chk)"/>
<path d="M81.5 373.5H91.5V383.5H81.5Z M81.5 376H91.5" fill="none" stroke="#d0d0d0" stroke-width="1"/>
<path d="M82 374H86L84 375.5H82Z" fill="#d0d0d0"/>
<path d="M84.5 386L88.5 390L84.5 394" fill="none" stroke="#8a8a8a" stroke-width="1"/>
<path d="M207.5 382V380A2.5 2.5 0 0 1 210.5 377.5" fill="none" stroke="rgba(255,255,255,0.22)" stroke-width="1.4"/>
<rect x="202" y="383" width="10" height="7" rx="1" fill="rgba(255,255,255,0.22)"/>
<path transform="translate(0 -81.5)" d="M229 463.5C228 460.5 225.5 459.8 223.5 460.5C220.5 461.5 219.3 465.5 219.8 468C220.3 470.5 223 470.8 225 469.5C227 468.2 229.5 464.5 232 460.5 M227.2 466.3C228.2 468.8 229.5 470.3 232.3 470.2" fill="none" stroke="rgba(255,255,255,0.2)" stroke-width="1.75" stroke-linecap="round"/>
<path d="M238 380.7H245M247 380.7H253" stroke="rgba(255,255,255,0.2)" stroke-width="1.6"/>
<path d="M238 384H242M244 384H249M251 384H253" stroke="rgba(255,255,255,0.2)" stroke-width="1.6"/>
<path d="M238 387H245M247 387H253" stroke="rgba(255,255,255,0.2)" stroke-width="1.6"/>
<text x="95" y="388" font-family="Liberation Sans" font-size="10" letter-spacing="-0.57" font-weight="normal" fill="#f2f2f2">SKETCHES</text>
<rect x="2" y="397" width="254" height="1" fill="#282828"/>
<rect x="24" y="398" width="1" height="26" fill="#282828"/>
<rect x="78" y="398" width="1" height="26" fill="#282828"/>
<rect x="93" y="398" width="1" height="26" fill="#282828"/>
<rect x="198" y="398" width="1" height="26" fill="#282828"/>
<rect x="217" y="398" width="1" height="26" fill="#282828"/>
<rect x="236" y="398" width="1" height="26" fill="#282828"/>
<rect x="51" y="398" width="1" height="26" fill="#282828"/>
<path d="M37.5 407V416.5H46" stroke="#444" stroke-width="1" fill="none"/>
<path d="M6 410.5A7.5 7 0 0 1 20 410.5" fill="none" stroke="#d0d0d0" stroke-width="1.2"/>
<circle cx="13" cy="409" r="3.6" fill="#d0d0d0"/>
<path d="M6.5 413.5A7 6 0 0 0 19.5 413.5" fill="none" stroke="#d0d0d0" stroke-width="1.2"/>
<rect x="53.5" y="401" width="23" height="22" fill="#1a1a1a"/>
<rect x="54.5" y="402" width="21" height="20" fill="url(#chk)"/>
<path d="M82 401H90V406L88 411H82Z" fill="none" stroke="#d0d0d0" stroke-width="1"/>
<rect x="80.5" y="399.5" width="3" height="3" fill="#d0d0d0"/>
<rect x="88.5" y="399.5" width="3" height="3" fill="#d0d0d0"/>
<rect x="80.5" y="409.5" width="3" height="3" fill="#d0d0d0"/>
<path d="M207.5 409V407A2.5 2.5 0 0 1 210.5 404.5" fill="none" stroke="#4a4a4a" stroke-width="1.4"/>
<rect x="202" y="410" width="10" height="7" rx="1" fill="#4a4a4a"/>
<path transform="translate(0 -54.5)" d="M229 463.5C228 460.5 225.5 459.8 223.5 460.5C220.5 461.5 219.3 465.5 219.8 468C220.3 470.5 223 470.8 225 469.5C227 468.2 229.5 464.5 232 460.5 M227.2 466.3C228.2 468.8 229.5 470.3 232.3 470.2" fill="none" stroke="#555" stroke-width="1.75" stroke-linecap="round"/>
<text x="95" y="415" font-family="Liberation Sans" font-size="10" letter-spacing="-0.35" font-weight="normal" fill="#f2f2f2">PANELS</text>
<rect x="2" y="424" width="254" height="1" fill="#282828"/>
<rect x="24" y="425" width="1" height="26" fill="#282828"/>
<rect x="51" y="425" width="1" height="26" fill="#282828"/>
<rect x="66" y="425" width="1" height="26" fill="#282828"/>
<rect x="198" y="425" width="1" height="26" fill="#282828"/>
<rect x="217" y="425" width="1" height="26" fill="#282828"/>
<rect x="236" y="425" width="1" height="26" fill="#282828"/>
<path d="M6 437.5A7.5 7 0 0 1 20 437.5" fill="none" stroke="#d0d0d0" stroke-width="1.2"/>
<circle cx="13" cy="436" r="3.6" fill="#d0d0d0"/>
<path d="M6.5 440.5A7 6 0 0 0 19.5 440.5" fill="none" stroke="#d0d0d0" stroke-width="1.2"/>
<rect x="31" y="429" width="15" height="20" fill="#2f3b47"/>
<path d="M58 428.5H63.5V436L61.5 438H55.5V435" fill="none" stroke="#d0d0d0" stroke-width="1"/>
<path d="M57.5 426.5L61 430L57.5 433.5L54 430Z" fill="#d0d0d0"/>
<path d="M207.5 436V434A2.5 2.5 0 0 1 210.5 431.5" fill="none" stroke="#4a4a4a" stroke-width="1.4"/>
<rect x="202" y="437" width="10" height="7" rx="1" fill="#4a4a4a"/>
<path transform="translate(0 -27.5)" d="M229 463.5C228 460.5 225.5 459.8 223.5 460.5C220.5 461.5 219.3 465.5 219.8 468C220.3 470.5 223 470.8 225 469.5C227 468.2 229.5 464.5 232 460.5 M227.2 466.3C228.2 468.8 229.5 470.3 232.3 470.2" fill="none" stroke="#555" stroke-width="1.75" stroke-linecap="round"/>
<text x="68" y="442" font-family="Liberation Sans" font-size="10" letter-spacing="-0.09" font-weight="normal" fill="#f2f2f2">Fill Layer 2</text>
<rect x="2" y="451" width="254" height="1" fill="#282828"/>
<rect x="24" y="452" width="1" height="26" fill="#282828"/>
<rect x="51" y="452" width="1" height="26" fill="#282828"/>
<rect x="66" y="452" width="1" height="26" fill="#282828"/>
<rect x="198" y="452" width="1" height="26" fill="#282828"/>
<rect x="217" y="452" width="1" height="26" fill="#282828"/>
<rect x="236" y="452" width="1" height="26" fill="#282828"/>
<path d="M6 464.5A7.5 7 0 0 1 20 464.5" fill="none" stroke="#d0d0d0" stroke-width="1.2"/>
<circle cx="13" cy="463" r="3.6" fill="#d0d0d0"/>
<path d="M6.5 467.5A7 6 0 0 0 19.5 467.5" fill="none" stroke="#d0d0d0" stroke-width="1.2"/>
<rect x="31" y="456" width="15" height="20" fill="#ffffff"/>
<path d="M57 455.5H63.5V463L61.5 465H55.5V462" fill="none" stroke="#d0d0d0" stroke-width="1"/>
<path d="M54 456L60 462" stroke="#d0d0d0" stroke-width="1.4"/>
<path d="M204 463V460.5A3 3 0 0 1 210 460.5V463" fill="none" stroke="#dadada" stroke-width="1.6"/>
<rect x="202" y="463" width="10" height="8" rx="1" fill="#dadada"/>
<path transform="translate(0 -0.5)" d="M229 463.5C228 460.5 225.5 459.8 223.5 460.5C220.5 461.5 219.3 465.5 219.8 468C220.3 470.5 223 470.8 225 469.5C227 468.2 229.5 464.5 232 460.5 M227.2 466.3C228.2 468.8 229.5 470.3 232.3 470.2" fill="none" stroke="#555" stroke-width="1.75" stroke-linecap="round"/>
<rect x="238" y="458" width="15" height="15" fill="#444"/>
<rect x="238" y="463" width="5" height="5" fill="#6a6a6a"/>
<rect x="243" y="458" width="5" height="5" fill="#6a6a6a"/>
<rect x="243" y="468" width="5" height="5" fill="#6a6a6a"/>
<rect x="248" y="463" width="5" height="5" fill="#6a6a6a"/>
<text x="68" y="469" font-family="Liberation Sans" font-size="10" letter-spacing="0.2" font-weight="normal" fill="#f2f2f2">Background</text>
<rect x="2" y="478" width="254" height="1" fill="#282828"/>
<defs><pattern id="chk" width="6" height="6" patternUnits="userSpaceOnUse" x="0" y="0"><rect width="6" height="6" fill="#fff"/><rect width="3" height="3" fill="#d6d6d6"/><rect x="3" y="3" width="3" height="3" fill="#d6d6d6"/></pattern></defs>
</svg>
<svg class="a" style="left:0;top:626px" width="258" height="30" viewBox="0 626 258 30">
 <g fill="none" stroke="#d0d0d0" stroke-width="1.4">
  <rect x="6" y="633" width="14" height="14"/>
  <path d="M13 636V644M9 640H17"/>
  <path d="M46.5 637.5V646.5H55.5 M50.5 633.5H60.5V643.5H50.5Z"/>
  <path d="M78.5 636.5L85.5 643.5L92.5 636.5"/>
  <path d="M110.5 643.5L117.5 636.5L124.5 643.5"/>
  <path d="M142 635.5H158M142 640H158M142 644.5H158" stroke-width="1.3"/>
 </g>
 <path d="M27 639H34L30.5 642.5Z" fill="#a0a0a0"/>
 <g fill="#d0d0d0"><rect x="146" y="633.5" width="2" height="4"/><rect x="152" y="638" width="2" height="4"/><rect x="146" y="642.5" width="2" height="4"/></g>
 <path d="M239 633H245V634.5H249V636H235V634.5H239Z M236 637H248V646A2 2 0 0 1 246 648H238A2 2 0 0 1 236 646Z" fill="#d0d0d0"/>
</svg><!-- canvas tab bar -->
<div class="a" style="left:258px;top:82px;width:860px;height:31px;background:#2c2c2c"></div>
<div class="a" style="left:265px;top:84px;width:427px;height:29px;background:#2a2a2a;border:1px solid #464646;border-bottom:none;border-radius:4px 4px 0 0"></div>
<div class="a" style="left:692px;top:82px;width:425px;height:31px;background:#323232;border:1px solid #4a4a4a;border-bottom:none;border-radius:4px 4px 0 0"></div>
<div class="a" style="left:264px;top:112px;width:428px;height:1px;background:#4a4a4a"></div>
<div class="t" style="left:443px;top:94px;font-size:11px;color:#e0e0e0;letter-spacing:-0.1px">WPG<u>5</u>4.kra *</div>
<div class="t" style="left:873px;top:93px;font-size:11px;color:#e0e0e0;letter-spacing:-0.05px">[Not Saved]</div>
<div class="a" style="left:660px;top:90px;width:17px;height:17px;border-radius:3px;background:radial-gradient(#484848,#1e1e1e);border:1px solid #7a7a7a"></div>
<div class="a" style="left:1087px;top:89px;width:17px;height:17px;border-radius:3px;background:radial-gradient(#484848,#1e1e1e);border:1px solid #7a7a7a"></div>
<svg class="a" style="left:0;top:80px" width="1366" height="35" viewBox="0 80 1366 35">
 <g stroke="#f4f4f4" stroke-width="2" stroke-linecap="round">
  <path d="M665.5 95.5L670.5 100.5M670.5 95.5L665.5 100.5"/>
  <path d="M1092.5 94.5L1097.5 99.5M1097.5 94.5L1092.5 99.5"/>
 </g>
</svg>


<div class="a" style="left:277.5px;top:90.5px;width:13.0px;height:13.0px;border-radius:50%;background:conic-gradient(from 0deg,#ff50f8 0deg,#ffb0e0 70deg,#fff070 125deg,#60b0f0 180deg,#40f0ff 235deg,#c0a8ff 300deg,#ff50f8 360deg)"></div>
<div class="a" style="left:279.45px;top:92.45px;width:9.1px;height:9.1px;border-radius:50%;background:radial-gradient(rgba(255,255,255,0.6),rgba(255,255,255,0))"></div>
<svg class="a" style="left:275px;top:88px" width="18" height="18" viewBox="0 0 18 18"><path d="M2.2 3.2L9.3 9.2" stroke="#3a3a3a" stroke-width="1.9" stroke-linecap="round"/><ellipse cx="12" cy="11.6" rx="1.7" ry="1.3" transform="rotate(40 12 11.6)" fill="#1e1e1e"/></svg>
<div class="a" style="left:704.5px;top:89.5px;width:13.0px;height:13.0px;border-radius:50%;background:conic-gradient(from 0deg,#ff50f8 0deg,#ffb0e0 70deg,#fff070 125deg,#60b0f0 180deg,#40f0ff 235deg,#c0a8ff 300deg,#ff50f8 360deg)"></div>
<div class="a" style="left:706.45px;top:91.45px;width:9.1px;height:9.1px;border-radius:50%;background:radial-gradient(rgba(255,255,255,0.6),rgba(255,255,255,0))"></div>
<svg class="a" style="left:702px;top:87px" width="18" height="18" viewBox="0 0 18 18"><path d="M2.2 3.2L9.3 9.2" stroke="#3a3a3a" stroke-width="1.9" stroke-linecap="round"/><ellipse cx="12" cy="11.6" rx="1.7" ry="1.3" transform="rotate(40 12 11.6)" fill="#1e1e1e"/></svg>
<!-- canvas -->
<div class="a" style="left:264px;top:113px;width:840px;height:529px;background:#808080"></div>
<div class="a" style="left:472px;top:113px;width:423px;height:529px;background:#2e3a46"></div>
<div class="a" style="left:476px;top:117px;width:415px;height:518px;border:1px solid #0d1115;border-radius:1px;box-shadow:0 0 0.5px #0d1115"></div>
<svg class="a" style="left:472px;top:630px" width="423" height="12" viewBox="0 0 423 12">
 <text x="5" y="10" font-family="Liberation Mono" font-weight="bold" font-style="italic" font-size="6.5" fill="#e8e8e8" letter-spacing="0.4">NO STEEL</text>
 <rect x="44.5" y="5" width="5" height="5" rx="1.5" fill="#b03080"/>
 <rect x="51" y="5" width="5" height="5" rx="2" fill="#20d060"/>
 <text x="57" y="10" font-family="Liberation Sans" font-weight="bold" font-style="italic" font-size="5.5" fill="#f0f0f0">tapas</text>
 <circle cx="358" cy="7.5" r="2.5" fill="#1da1f2"/>
 <rect x="362" y="5" width="5" height="5" rx="1.5" fill="#a03a80"/>
 <path d="M369 5V10" stroke="#c03050" stroke-width="1"/>
 <text x="375" y="10" font-family="Liberation Mono" font-weight="bold" font-style="italic" font-size="6.5" fill="#e8e8e8" letter-spacing="0">ADRIAN FALL</text>
</svg>
<!-- scroll bars -->
<div class="a" style="left:1104px;top:113px;width:14px;height:529px;background:#2f2f2f"></div>
<div class="a" style="left:1105px;top:113px;width:13px;height:13px;background:#333;border:1px solid #4a4a4a"></div>
<div class="a" style="left:1105px;top:289px;width:13px;height:178px;background:#363636;border:1px solid #4a4a4a"></div>
<div class="a" style="left:1105px;top:629px;width:13px;height:13px;background:#333;border:1px solid #4a4a4a"></div>
<div class="a" style="left:264px;top:643px;width:13px;height:13px;background:#333;border:1px solid #4a4a4a"></div>
<div class="a" style="left:508px;top:643px;width:352px;height:13px;background:#363636;border:1px solid #4a4a4a"></div>
<div class="a" style="left:1091px;top:643px;width:13px;height:13px;background:#333;border:1px solid #4a4a4a"></div>
<svg class="a" style="left:0;top:110px" width="1366" height="560" viewBox="0 110 1366 560">
 <path d="M1107.5 122.5H1115.5L1111.5 118.5Z" fill="#b8b8b8"/>
 <path d="M1107.5 633H1115.5L1111.5 637Z" fill="#c8c8c8"/>
 <path d="M273 645.5V653.5L269 649.5Z" fill="#c8c8c8"/>
 <path d="M1095 645.5V653.5L1099 649.5Z" fill="#c8c8c8"/>
 <g fill="#8c8c8c"><rect x="676" y="658" width="2" height="2"/><rect x="679" y="658" width="2" height="2"/><rect x="682" y="658" width="2" height="2"/><rect x="685" y="658" width="2" height="2"/><rect x="688" y="658" width="2" height="2"/><rect x="691" y="658" width="2" height="2"/></g>
 <g fill="#8c8c8c"><rect x="261" y="362" width="2" height="2"/><rect x="261" y="365" width="2" height="2"/><rect x="261" y="368" width="2" height="2"/><rect x="261" y="371" width="2" height="2"/><rect x="261" y="374" width="2" height="2"/><rect x="261" y="377" width="2" height="2"/></g>
 <g fill="#6c6c6c"><rect x="1121" y="362" width="2" height="2"/><rect x="1121" y="365" width="2" height="2"/><rect x="1121" y="368" width="2" height="2"/><rect x="1121" y="371" width="2" height="2"/><rect x="1121" y="374" width="2" height="2"/><rect x="1121" y="377" width="2" height="2"/></g>
 <rect x="1117" y="113" width="1" height="529" fill="#393939"/>
</svg>
<svg class="a" style="left:1118px;top:81px" width="248" height="420" viewBox="1118 81 248 420">
<path d="M1124.5 104.5V88.5A4 4 0 0 1 1128.5 84.5H1227A4 4 0 0 1 1231 88.5V104.5Z" fill="#2b2b2b" stroke="#444" stroke-width="1"/>
<path d="M1271.5 104.5V88.5A4 4 0 0 1 1275.5 84.5H1360.5A4 4 0 0 1 1364.5 88.5V104.5Z" fill="#2b2b2b" stroke="#444" stroke-width="1"/>
<path d="M1124 104.5H1232.5 M1269.5 104.5H1366" stroke="#444" stroke-width="1"/>
<path d="M1232.5 105V86A4 4 0 0 1 1236.5 82H1265.5A4 4 0 0 1 1269.5 86V105" fill="#333" stroke="#4a4a4a" stroke-width="1"/>
<text x="1136" y="98" font-family="Liberation Sans" font-size="10" letter-spacing="0.17" fill="#e6e6e6" ><tspan text-decoration="underline">A</tspan>dvanced Color...</text>
<text x="1243" y="98" font-family="Liberation Sans" font-size="10" letter-spacing="0" fill="#e6e6e6" ><tspan text-decoration="underline">P</tspan>...</text>
<text x="1283" y="98" font-family="Liberation Sans" font-size="10" letter-spacing="0.04" fill="#e6e6e6" >Specific <tspan text-decoration="underline">C</tspan>olor...</text>
<text x="1128.5" y="119.5" font-family="Liberation Sans" font-size="10" letter-spacing="-0.44" fill="#e6e6e6" ><tspan text-decoration="underline">P</tspan>alette</text>
<g fill="none" stroke="#8a8a8a" stroke-width="1">
 <rect x="1339.5" y="109.5" width="10" height="10" rx="1.5"/><rect x="1342.5" y="113.5" width="4" height="4"/><path d="M1344.5 113.5V111.5H1347.5V115.5H1346.5"/>
 <rect x="1353.5" y="109.5" width="10" height="10" rx="1.5"/><path d="M1355.5 111.5L1361.5 117.5M1361.5 111.5L1355.5 117.5" stroke-width="1.3"/>
</g>
<rect x="1125" y="125" width="225" height="114" fill="#262626"/>
<rect x="1126" y="126" width="22" height="8" fill="#FFFF80"/>
<rect x="1149" y="126" width="22" height="8" fill="#FFFF00"/>
<rect x="1172" y="126" width="22" height="8" fill="#FF8000"/>
<rect x="1195" y="126" width="22" height="8" fill="#FF8080"/>
<rect x="1218" y="126" width="21" height="8" fill="#FF80FF"/>
<rect x="1240" y="126" width="21" height="8" fill="#FF00FF"/>
<rect x="1262" y="126" width="21" height="8" fill="#FF0080"/>
<rect x="1284" y="126" width="21" height="8" fill="#FF0000"/>
<rect x="1306" y="126" width="21" height="8" fill="#800000"/>
<rect x="1328" y="126" width="21" height="8" fill="#0A0A00"/>
<rect x="1126" y="135" width="22" height="21" fill="#F5FFFF"/>
<rect x="1149" y="135" width="22" height="21" fill="#E8F6FF"/>
<rect x="1172" y="135" width="22" height="21" fill="#D0E4FF"/>
<rect x="1195" y="135" width="22" height="21" fill="#B0C8FF"/>
<rect x="1218" y="135" width="21" height="21" fill="#80B4FF"/>
<rect x="1240" y="135" width="21" height="21" fill="#2070FF"/>
<rect x="1262" y="135" width="21" height="21" fill="#0040B0"/>
<rect x="1284" y="135" width="21" height="21" fill="#304080"/>
<rect x="1306" y="135" width="21" height="21" fill="#003050"/>
<rect x="1328" y="135" width="21" height="21" fill="#101028"/>
<rect x="1126" y="157" width="22" height="21" fill="#F0F2EE"/>
<rect x="1149" y="157" width="22" height="21" fill="#D8E4DC"/>
<rect x="1172" y="157" width="22" height="21" fill="#A8D8B4"/>
<rect x="1195" y="157" width="22" height="21" fill="#6AAAC8"/>
<rect x="1218" y="157" width="21" height="21" fill="#48AAB0"/>
<rect x="1240" y="157" width="21" height="21" fill="#008080"/>
<rect x="1262" y="157" width="21" height="21" fill="#4A6E64"/>
<rect x="1284" y="157" width="21" height="21" fill="#2E5050"/>
<rect x="1306" y="157" width="21" height="21" fill="#1E3038"/>
<rect x="1328" y="157" width="21" height="21" fill="#101E24"/>
<rect x="1126" y="179" width="22" height="21" fill="#D8FFF4"/>
<rect x="1149" y="179" width="22" height="21" fill="#B4F0F0"/>
<rect x="1172" y="179" width="22" height="21" fill="#B0C8B4"/>
<rect x="1195" y="179" width="22" height="21" fill="#78C47C"/>
<rect x="1218" y="179" width="21" height="21" fill="#3A8C5A"/>
<rect x="1240" y="179" width="21" height="21" fill="#46A06E"/>
<rect x="1262" y="179" width="21" height="21" fill="#4A8C6E"/>
<rect x="1284" y="179" width="21" height="21" fill="#20542E"/>
<rect x="1306" y="179" width="21" height="21" fill="#283E38"/>
<rect x="1328" y="179" width="21" height="21" fill="#14301E"/>
<rect x="1126" y="201" width="22" height="21" fill="#F0FFD0"/>
<rect x="1149" y="201" width="22" height="21" fill="#E4F08A"/>
<rect x="1172" y="201" width="22" height="21" fill="#C0F020"/>
<rect x="1195" y="201" width="22" height="21" fill="#D8D818"/>
<rect x="1218" y="201" width="21" height="21" fill="#88D028"/>
<rect x="1240" y="201" width="21" height="21" fill="#607C08"/>
<rect x="1262" y="201" width="21" height="21" fill="#5E9830"/>
<rect x="1284" y="201" width="21" height="21" fill="#2E8008"/>
<rect x="1306" y="201" width="21" height="21" fill="#004020"/>
<rect x="1328" y="201" width="21" height="21" fill="#1E3020"/>
<rect x="1126" y="223" width="22" height="15.5" fill="#00FF80"/>
<rect x="1149" y="223" width="22" height="15.5" fill="#00FF00"/>
<rect x="1172" y="223" width="22" height="15.5" fill="#80FF80"/>
<rect x="1195" y="223" width="22" height="15.5" fill="#80FFFF"/>
<rect x="1218" y="223" width="21" height="15.5" fill="#00FFFF"/>
<rect x="1240" y="223" width="21" height="15.5" fill="#8080FF"/>
<rect x="1262" y="223" width="21" height="15.5" fill="#8000FF"/>
<rect x="1284" y="223" width="21" height="15.5" fill="#0000FF"/>
<rect x="1306" y="223" width="21" height="15.5" fill="#400080"/>
<rect x="1328" y="223" width="21" height="15.5" fill="#000080"/>
<rect x="1351" y="126" width="13" height="113" fill="#2c2c2c"/>
<rect x="1351.5" y="126.5" width="12" height="12" fill="#333" stroke="#4a4a4a"/>
<path d="M1353.5 134.5H1361.5L1357.5 130.5Z" fill="#c0c0c0"/>
<rect x="1351.5" y="187.5" width="12" height="34" fill="#363636" stroke="#4a4a4a"/>
<rect x="1351.5" y="225.5" width="12" height="12" fill="#333" stroke="#4a4a4a"/>
<path d="M1353.5 229.5H1361.5L1357.5 233.5Z" fill="#c0c0c0"/>
<rect x="1126" y="241" width="238" height="22" rx="2" fill="#1c1c1c"/>
<rect x="1129" y="244" width="16" height="16" fill="#00ffff"/>
<text x="1148.5" y="256" font-family="Liberation Sans" font-size="10" letter-spacing="-0.34" fill="#e6e6e6" >RGB Cyan</text>
<rect x="1345.5" y="241.5" width="18" height="21" rx="2" fill="#333" stroke="#444"/>
<path d="M1350.5 250H1358.5L1354.5 254Z" fill="#c0c0c0"/>
<rect x="1126.5" y="266.5" width="25" height="21" rx="3" fill="#363636" stroke="#474747"/>
<rect x="1132" y="270" width="4" height="4" fill="#40c8e0"/>
<rect x="1136" y="270" width="4" height="4" fill="#60d0d0"/>
<rect x="1140" y="270" width="4" height="4" fill="#50c0c8"/>
<rect x="1144" y="270" width="4" height="4" fill="#80d8d8"/>
<rect x="1132" y="275" width="4" height="4" fill="#e04060"/>
<rect x="1136" y="275" width="4" height="4" fill="#e060a0"/>
<rect x="1140" y="275" width="4" height="4" fill="#d050e0"/>
<rect x="1144" y="275" width="4" height="4" fill="#e070f0"/>
<rect x="1132" y="280" width="4" height="4" fill="#e0f040"/>
<rect x="1136" y="280" width="4" height="4" fill="#d0e060"/>
<rect x="1140" y="280" width="4" height="4" fill="#c0e080"/>
<rect x="1144" y="280" width="4" height="4" fill="#d8f0a0"/>
<text x="1154.5" y="281" font-family="Liberation Sans" font-size="10" letter-spacing="-0.26" fill="#e6e6e6" >Default</text>
<rect x="1267.5" y="266.5" width="21" height="21" rx="3" fill="#363636" stroke="#474747"/>
<rect x="1292.5" y="266.5" width="21" height="21" rx="3" fill="#363636" stroke="#474747"/>
<rect x="1317.5" y="266.5" width="21" height="21" rx="3" fill="#363636" stroke="#474747"/>
<rect x="1342.5" y="266.5" width="21" height="21" rx="3" fill="#363636" stroke="#474747"/>
<path d="M1278 271V283M1272 277H1284" stroke="#d0d0d0" stroke-width="1.2"/>
<path d="M1296.5 282.5L1298 278L1306 270L1309 273L1301 281Z" fill="none" stroke="#d0d0d0" stroke-width="1.1"/>
<rect x="1321.5" y="270.5" width="13" height="13" fill="none" stroke="#d0d0d0" stroke-width="1.3"/><rect x="1321.5" y="270.5" width="6" height="3" fill="#d0d0d0"/><rect x="1321.5" y="273.5" width="13" height="1.5" fill="#d0d0d0"/>
<circle cx="1353" cy="277" r="5.8" fill="none" stroke="#e04050" stroke-width="1.3"/><path d="M1349 273L1357 281" stroke="#e04050" stroke-width="1.3"/>
<g fill="#8c8c8c"><rect x="1238" y="292" width="2" height="2"/><rect x="1241" y="292" width="2" height="2"/><rect x="1244" y="292" width="2" height="2"/><rect x="1247" y="292" width="2" height="2"/><rect x="1250" y="292" width="2" height="2"/><rect x="1253" y="292" width="2" height="2"/></g>
<path d="M1125.5 319.5V303A4 4 0 0 1 1129.5 299H1196.5A4 4 0 0 1 1200.5 303V319.5Z" fill="#2b2b2b" stroke="#444" stroke-width="1"/>
<path d="M1278.5 319.5V303A4 4 0 0 1 1282.5 299H1360A4 4 0 0 1 1364 303V319.5Z" fill="#2b2b2b" stroke="#444" stroke-width="1"/>
<path d="M1124 319.5H1202 M1276 319.5H1366" stroke="#444" stroke-width="1"/>
<path d="M1202.5 320V301A4 4 0 0 1 1206.5 297H1272A4 4 0 0 1 1276 301V320" fill="#333" stroke="#4a4a4a" stroke-width="1"/>
<text x="1136.5" y="313" font-family="Liberation Sans" font-size="10" letter-spacing="-0.13" fill="#e6e6e6" ><tspan text-decoration="underline">B</tspan>rush Pre...</text>
<text x="1214.5" y="312" font-family="Liberation Sans" font-size="10" letter-spacing="0.16" fill="#e6e6e6" >Tool <tspan text-decoration="underline">O</tspan>pti...</text>
<text x="1289.5" y="313" font-family="Liberation Sans" font-size="10" letter-spacing="0.06" fill="#e6e6e6" ><tspan text-decoration="underline">G</tspan>rid and Gu...</text>
<text x="1128" y="334" font-family="Liberation Sans" font-size="10" letter-spacing="0.23" fill="#e6e6e6" >Tool <tspan text-decoration="underline">O</tspan>ptions</text>
<g fill="none" stroke="#8a8a8a" stroke-width="1"><rect x="1353.5" y="324.5" width="10" height="11" rx="1.5"/><rect x="1356.5" y="328.5" width="4" height="4"/><path d="M1358.5 328.5V326.5H1361.5V330.5H1360.5"/></g>
<text x="1128.5" y="363" font-family="Liberation Sans" font-size="10" letter-spacing="0.11" fill="#e6e6e6" >Brush Smoothing:</text>
<rect x="1239.5" y="349.5" width="121" height="19" rx="3" fill="#363636" stroke="#474747"/>
<text x="1243" y="363" font-family="Liberation Sans" font-size="10" letter-spacing="-0.3" fill="#e6e6e6" >Stabilizer</text>
<path d="M1346 357H1354L1350 361Z" fill="#c0c0c0"/>
<text x="1128.5" y="389" font-family="Liberation Sans" font-size="10" letter-spacing="-0.19" fill="#e6e6e6" >Distance:</text>
<rect x="1239" y="376" width="122" height="17" rx="2" fill="#1c1c1c"/>
<path d="M1239 378A2 2 0 0 1 1241 376H1280V393H1241A2 2 0 0 1 1239 391Z" fill="#52728f"/>
<rect x="1347.5" y="376.5" width="13" height="16" rx="2" fill="#333" stroke="#474747"/>
<path d="M1350.5 383.5H1357.5L1354 379.5Z M1350.5 386H1357.5L1354 390Z" fill="#c0c0c0"/>
<text x="1283" y="389" font-family="Liberation Sans" font-size="10" letter-spacing="-0.47" fill="#e6e6e6" >59,0</text>
<text x="1128.5" y="412.5" font-family="Liberation Sans" font-size="10" letter-spacing="-0.14" fill="#e6e6e6" >Delay:</text>
<rect x="1219" y="401" width="14" height="14" fill="#1c1c1c"/>
<path d="M1222.5 407.5L1225.5 412L1229.5 403" fill="none" stroke="#e0e0e0" stroke-width="1.3"/>
<rect x="1239" y="400" width="122" height="17" rx="2" fill="#1c1c1c"/>
<path d="M1239 402A2 2 0 0 1 1241 400H1283V417H1241A2 2 0 0 1 1239 415Z" fill="#52728f"/>
<rect x="1347.5" y="400.5" width="13" height="16" rx="2" fill="#333" stroke="#474747"/>
<path d="M1350.5 407.5H1357.5L1354 403.5Z M1350.5 410H1357.5L1354 414Z" fill="#c0c0c0"/>
<text x="1280" y="413" font-family="Liberation Sans" font-size="10" letter-spacing="-0.17" fill="#e6e6e6" >34 px</text>
<text x="1128.5" y="435.5" font-family="Liberation Sans" font-size="10" letter-spacing="-0.07" fill="#7a7a7a" >Finish line:</text>
<rect x="1238" y="425" width="14" height="14" fill="#222"/>
<path d="M1241.5 431.5L1244.5 436L1248.5 427" fill="none" stroke="#707070" stroke-width="1.3"/>
<text x="1128.5" y="458" font-family="Liberation Sans" font-size="10" letter-spacing="-0.25" fill="#e6e6e6" >Stabilize Sensors:</text>
<rect x="1238" y="447" width="14" height="14" fill="#222"/>
<rect x="1128" y="468" width="234" height="1.3" fill="#d8d8d8"/>
<rect x="1128" y="477" width="14" height="14" fill="#222"/>
<text x="1147" y="488" font-family="Liberation Sans" font-size="10" letter-spacing="-0.14" fill="#e6e6e6" >Snap to Assistants</text>
</svg><div class="a" style="left:103px;top:677px;width:23px;height:23px;border-radius:3px;background:#5a7591;border:1px solid #6d87a0"></div>
<svg class="a" style="left:0;top:675px" width="1366" height="30" viewBox="0 675 1366 30">
 <defs><linearGradient id="gr" x1="0" y1="0" x2="1" y2="0"><stop offset="0" stop-color="#1e1e1e"/><stop offset="1" stop-color="#e0e0e0"/></linearGradient></defs>
 <g fill="#d2d2d2" stroke="none">
  <!-- arrow -->
  <path d="M8 681L17 690.5H13.5L16.5 695L14.5 696L11.5 691.5L8.5 694Z"/>
  <!-- brush in button -->
  <path d="M119.5 681.2C121.3 680.2 122.3 681.5 121.2 683L117.2 687.8L115 686.3Z"/>
  <path d="M114 687.3L116.3 689.5C115.8 693 112.2 695.2 108.5 694.6C110.8 693 110.2 689.5 114 687.3Z"/>
  <!-- pen nib -->
  <path d="M78 694.5L80.5 687.5L85.5 683L89.5 687L85 692Z"/>
  <!-- T -->
  <path d="M30.5 681H42.5V684.5H41.3V682.5H37.5V693.5H39.5V695H33.5V693.5H35.5V682.5H31.7V684.5H30.5Z"/>
  <!-- hand -->
  <path d="M858.5 689.5V683A1.1 1.1 0 0 1 860.7 683V681A1.1 1.1 0 0 1 862.9 681V681.5A1.1 1.1 0 0 1 865.1 681.5V682.5A1.1 1.1 0 0 1 867.3 682.5V683.5A1.1 1.1 0 0 1 869.5 683.5V691.5C869.5 694 868 695.5 865.5 695.5H862C860.5 695.5 859.5 694.8 858.7 693.5L856 689.8A1.1 1.1 0 0 1 858 688.6Z"/>
  <!-- pin -->
  <path d="M613 681L619.5 687.5L617 688.5L613.5 692L614 694L611.5 694.5L606.5 689.5L607 687L609 687.5L612.5 684Z"/>
 </g>
 <path d="M864.3 688V683 M862 688V682 M866.5 688V684" stroke="#333" stroke-width="0.7"/>
 <path d="M81 692L84 689" stroke="#333" stroke-width="0.9"/>
 <rect x="431.5" y="681.5" width="13" height="13" fill="url(#gr)" stroke="#d2d2d2" stroke-width="1.2"/>
 <g fill="none" stroke="#d2d2d2" stroke-width="1.4" stroke-linecap="round" stroke-linejoin="round">
  <!-- select shapes path tool -->
  <path d="M54 694.5C54 688 58 683 65.5 682.5"/>
  <circle cx="65.5" cy="682.5" r="1.1" fill="#d2d2d2"/><circle cx="54" cy="694.5" r="1.1" fill="#d2d2d2"/>
  <path d="M59.5 688L66.5 691L63 692L62 695.5Z" fill="#d2d2d2"/>
  <path d="M84.5 682L90 687.5" stroke-width="1.3"/>
  <!-- line -->
  <path d="M131.5 694.5L144 682"/>
  <!-- rect -->
  <rect x="155.5" y="681.5" width="13" height="13"/>
  <!-- ellipse -->
  <circle cx="186" cy="688" r="6.6"/>
  <!-- polygon -->
  <path d="M204 688.5L208 682H216.5L213.5 691L208.5 694.5H204Z"/>
  <!-- polyline -->
  <path d="M227 681.5L240.5 688L227.5 694.5L233 681"/>
  <!-- bezier curve -->
  <path d="M251.5 695V690C251.5 685.5 254.5 682.5 258 682.5C261.5 682.5 264.5 685.5 264.5 690V695 M252 682.5H264"/>
  <rect x="256.5" y="681" width="3" height="3" fill="#333"/>
  <circle cx="252" cy="682.5" r="1.2" fill="#d2d2d2"/><circle cx="264" cy="682.5" r="1.2" fill="#d2d2d2"/>
  <!-- freehand path -->
  <path d="M277 685.5C277.5 683 280 682 283 682H286.5V684 M286 684C286 688 284.5 690 284.5 693"/>
  <rect x="275" y="684.5" width="3.5" height="3.5" fill="#333" stroke-width="1"/>
  <rect x="283" y="692" width="3.5" height="3.5" fill="#333" stroke-width="1"/>
  <!-- dyna -->
  <path d="M301 682C307 681 313 682 312.5 685.5C312 689 305.5 692.5 299.5 694.5"/>
  <circle cx="306" cy="686" r="1" fill="#d2d2d2"/>
  <!-- multibrush -->
  <path d="M327 686.5L337 681M329 692L337 681M334 693L337 681" stroke-width="1.3"/>
  <circle cx="325.5" cy="686.5" r="1.6" fill="#d2d2d2"/><circle cx="328.5" cy="692" r="1.6" fill="#d2d2d2"/><circle cx="333.5" cy="693" r="1.6" fill="#d2d2d2"/>
  <!-- transform -->
  <rect x="354.5" y="682" width="11.5" height="12"/>
  <circle cx="360.2" cy="688" r="0.8" fill="#d2d2d2"/>
  <g fill="#d2d2d2" stroke="none"><circle cx="354.5" cy="682" r="1.3"/><circle cx="366" cy="682" r="1.3"/><circle cx="354.5" cy="694" r="1.3"/><circle cx="366" cy="694" r="1.3"/><circle cx="360.2" cy="682" r="1.1"/><circle cx="360.2" cy="694" r="1.1"/><circle cx="354.5" cy="688" r="1.1"/><circle cx="366" cy="688" r="1.1"/></g>
  <!-- move -->
  <path d="M384 682V694.5M377.5 688H390.5"/>
  <path d="M384 681L386.5 683.5H381.5Z M384 695.5L386.5 693H381.5Z M376.5 688L379 685.5V690.5Z M391.5 688L389 685.5V690.5Z" fill="#d2d2d2" stroke-width="0.6"/>
  <!-- crop -->
  <path d="M403.5 681.5V693.5H414.5 M402 684H412.5V695"/>
  <!-- color picker -->
  <path d="M456.5 694.5L463.5 687.5" stroke-width="3.2"/>
  <path d="M462 682.5L468 688.5" stroke-width="2.6"/>
  <rect x="463" y="680" width="6" height="6" transform="rotate(45 466 683)" fill="#d2d2d2" stroke="none"/>
  <!-- smart patch -->
  <path d="M484 692.5C482.5 690 484 687 487 686.5L489 688.5C488.5 691.5 486.5 692.5 484 692.5Z" fill="#d2d2d2" stroke="none"/>
  <path d="M488 687.5L490 685.5" stroke-width="1.3"/>
  <path d="M491 684L493 682" stroke-width="2.8"/>
  <path d="M480 690.5H481.5M481 687L482 688M483.5 684L484 685.5M480.5 693.5L481.5 693M483 695.5L483.5 694.5M486 695.5V694.5M488.5 694.5L488 693.5M490.5 693L489.5 692.5" stroke-width="0.9"/>
  <!-- percent -->
  <path d="M505.5 693.5L515 684" stroke-width="3.4" stroke-linecap="butt"/>
  <rect x="504.5" y="682.5" width="4" height="4" transform="rotate(45 506.5 684.5)" fill="#d2d2d2" stroke="none"/>
  <rect x="511.5" y="689.5" width="4" height="4" transform="rotate(45 513.5 691.5)" fill="#d2d2d2" stroke="none"/>
  <!-- fill -->
  <path d="M532 682.5L538.5 689L533.5 694L528 688.5Z" stroke-width="1.3"/>
  <path d="M530 686.5L536.5 687.5L533.5 691Z" fill="#d2d2d2" stroke="none"/>
  <path d="M539 692.5L540.5 695H537.5Z" fill="#d2d2d2" stroke="none"/>
  <!-- assistant tool -->
  <path d="M557.5 682V695H571L557.5 682Z M560.5 689V692H563.5"/>
  <!-- measure -->
  <path d="M581 682L594.5 695.5V682 M587.5 688.5H594.5"/>
  <!-- pin line -->
  <path d="M606 695L610 691"/>
  <!-- selections dashed -->
  <g stroke-dasharray="2.6 1.9" stroke-linecap="butt">
   <rect x="635.5" y="681.5" width="13" height="13"/>
   <circle cx="666" cy="688" r="6.5"/>
   <path d="M683.5 694.5V686.5L688.5 681.5H696.5V689.5L691.5 694.5Z"/>
   <path d="M708 689C707 684 711 681.5 715 682C719 682.5 721 685 721 688.5C721 691.5 719.5 694 718 695"/>
   <path d="M713 688L716 692"/>
   <path d="M755.5 695V681.5H759 M765 695H769V690"/>
   <path d="M780 685C779 690 781 695 786 695C791 695 793 690 792 685"/>
   <path d="M803.5 695V681.5H806 M812 695H816.5V690"/>
  </g>
  <path d="M755.5 690V695H761" />
  <path d="M758 692.5L765 685.5" stroke-width="2"/>
  <path d="M764 683.5L768 687.5" stroke-width="2"/>
  <path d="M779.5 682H792.5"/>
  <circle cx="786" cy="682" r="1.8" fill="#333"/>
  <path d="M807 687C807 683 810 681.5 812.5 681.5C815.5 681.5 817 684 816.5 686.5L812 691.5"/>
  <!-- magic wand -->
  <path d="M737 685.5L744 694"/>
  <path d="M735.5 679.5V687M732 683.3H739M733 680.8L738 685.8M738 680.8L733 685.8" stroke-width="1.3"/>
  <!-- zoom -->
  <circle cx="843.5" cy="685" r="4.2" stroke-width="1.6"/>
  <path d="M840.5 688L835.5 693.5" stroke-width="2.2"/>
 </g>
 <g fill="#2a2a2a">
  <rect x="100" y="680" width="1" height="17"/><rect x="346" y="680" width="1" height="17"/><rect x="424" y="680" width="1" height="17"/><rect x="550" y="680" width="1" height="17"/><rect x="628" y="680" width="1" height="17"/><rect x="826" y="680" width="1" height="17"/>
 </g>
 <rect x="1343" y="704" width="20" height="1" fill="#555"/>
</svg>

</body></html>
